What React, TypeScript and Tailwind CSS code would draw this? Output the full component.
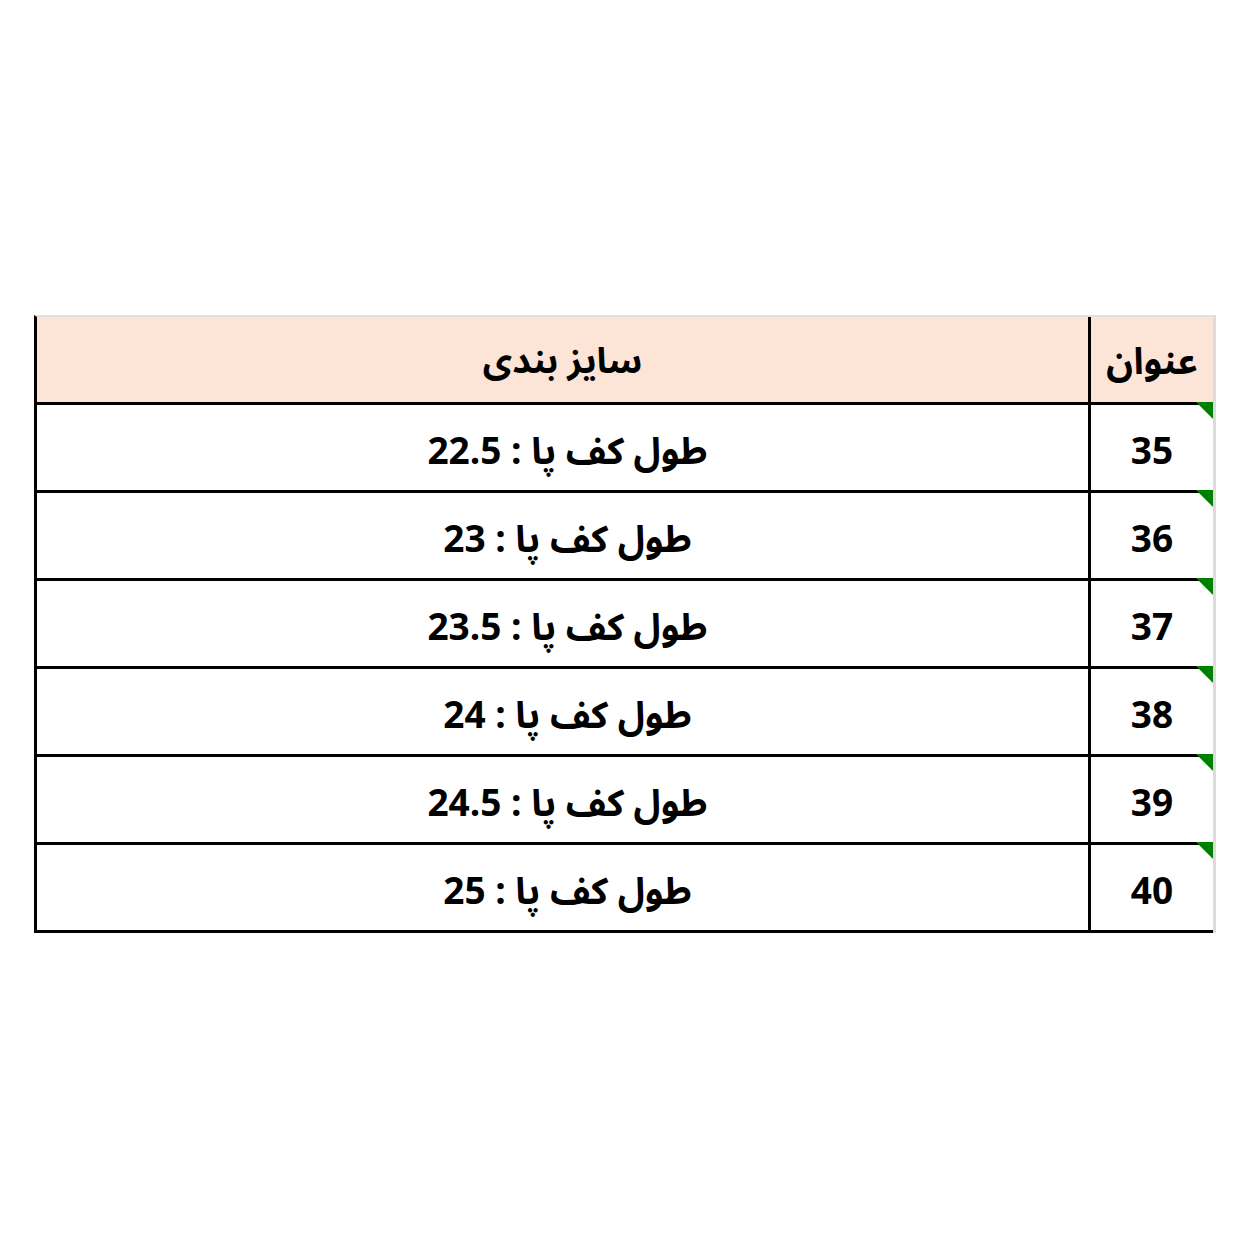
import React from "react";

const rows = [
  { n: "35", t: "طول کف پا : 22.5" },
  { n: "36", t: "طول کف پا : 23" },
  { n: "37", t: "طول کف پا : 23.5" },
  { n: "38", t: "طول کف پا : 24" },
  { n: "39", t: "طول کف پا : 24.5" },
  { n: "40", t: "طول کف پا : 25" },
];

const font = {
  fontFamily:
    '"Open Sans", "Noto Sans Arabic", "Noto Naskh Arabic", "DejaVu Sans", sans-serif',
};

export default function App() {
  return (
    <div className="w-[1250px] h-[1240px] bg-white pt-[315px] pl-[34px]" style={font}>
      <div
        dir="rtl"
        className="w-[1182px] border-t-2 border-t-[#e0e0e0] border-r-[3px] border-r-[#dcdcdc] border-l-[3px] border-l-black text-black"
      >
        <div className="flex h-[88px] border-b-[3px] border-b-black bg-[#fce4d6]">
          <div className="w-[125px] shrink-0 border-l-[3px] border-l-black flex items-center justify-center text-[37px] font-bold leading-none">
            عنوان
          </div>
          <div className="flex-1 flex items-center justify-center text-[36px] font-bold leading-none">
            سایز بندی
          </div>
        </div>
        {rows.map((r) => (
          <div key={r.n} className="flex h-[88px] border-b-[3px] border-b-black">
            <div className="relative w-[125px] shrink-0 border-l-[3px] border-l-black flex items-center justify-center text-[37px] font-bold leading-none">
              <span
                className="absolute top-[-3px] right-0 w-[17px] h-[17px] bg-[#008000]"
                style={{ clipPath: "polygon(0 0, 100% 0, 100% 100%)" }}
              />
              <span dir="ltr" className="pt-[3px]">{r.n}</span>
            </div>
            <div className="flex-1 flex items-center justify-center text-[37px] font-bold leading-none pt-[3px] pl-[10px]">
              {r.t}
            </div>
          </div>
        ))}
      </div>
    </div>
  );
}
